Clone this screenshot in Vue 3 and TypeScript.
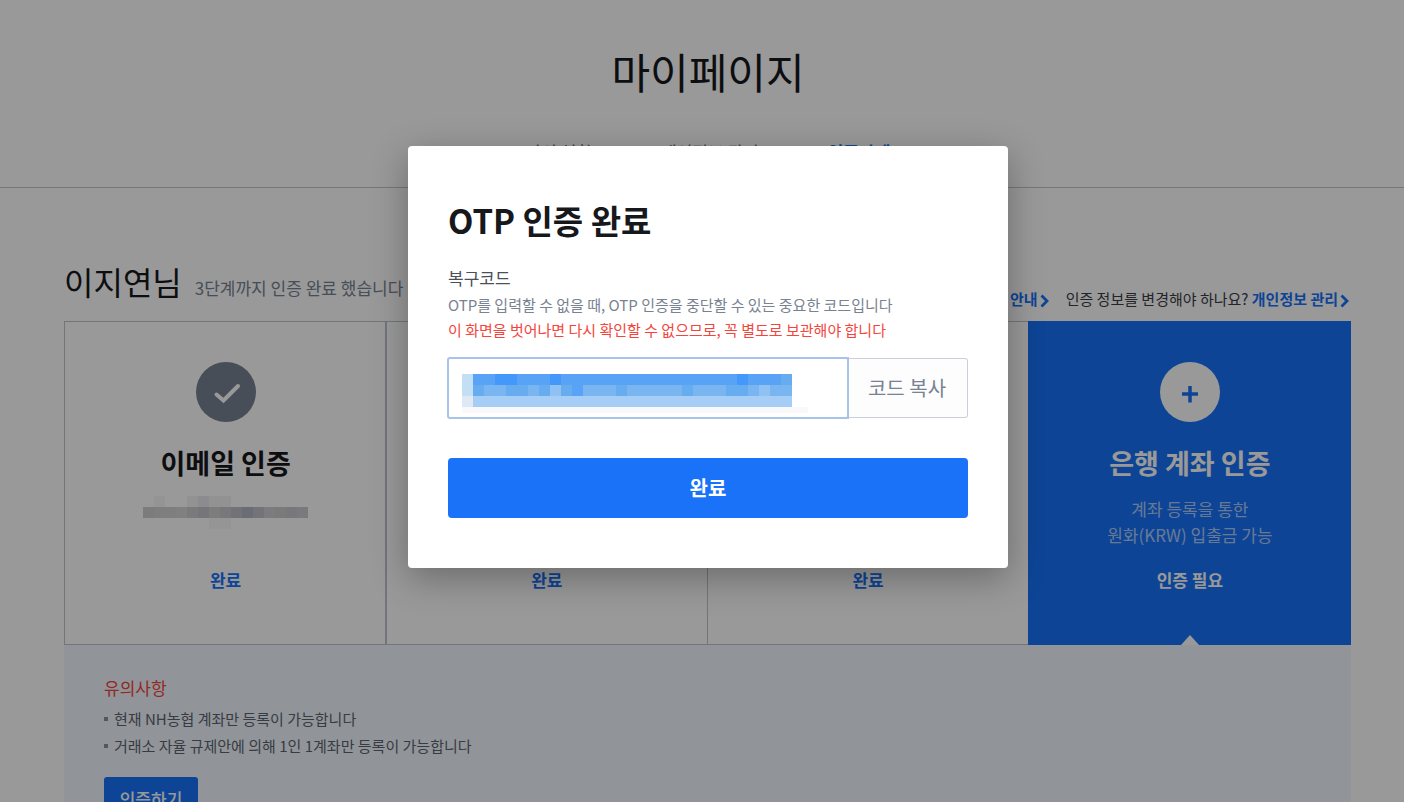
<script setup lang="ts">
import { ref } from 'vue'

interface Card {
  title: string
  desc: string[]
  status: string
  done: boolean
}

interface Tile {
  x: number
  y: number
  w: number
  h: number
  c: string
}

const tabs = ['나의 현황', '개인정보 관리', '인증단계']

const cards: Card[] = [
  { title: '이메일 인증', desc: [], status: '완료', done: true },
  { title: '휴대폰 인증', desc: [], status: '완료', done: true },
  { title: 'OTP 인증', desc: [], status: '완료', done: true },
  { title: '은행 계좌 인증', desc: ['계좌 등록을 통한', '원화(KRW) 입출금 가능'], status: '인증 필요', done: false },
]

const notes = ['현재 NH농협 계좌만 등록이 가능합니다', '거래소 자율 규제안에 의해 1인 1계좌만 등록이 가능합니다']

const code = ref('')

const shades: Record<string, string> = {
  '4': '#4498fa',
  '5': '#58a3f5',
  '6': '#68acf0',
  '7': '#79b6f1',
  '8': '#8fc1f3',
}
const row1 = '55445554555555555555555545556'.split('')
const row2 = '67766768657776777776777667877'.split('')

const codeTiles: Tile[] = [
  { x: 0, y: 0, w: 11, h: 22, c: '#c3dff6' },
  { x: 0, y: 22, w: 11, h: 11, c: '#dfe9f6' },
  { x: 11, y: 22, w: 319, h: 11, c: '#a5cdf5' },
  ...row1.map((k, i) => ({ x: 11 + i * 11, y: 0, w: 11, h: 11, c: shades[k] })),
  ...row2.map((k, i) => ({ x: 11 + i * 11, y: 11, w: 11, h: 11, c: shades[k] })),
  { x: 0, y: 33, w: 346, h: 6, c: '#f9f9fb' },
]

const mailShades = ['#cfcfd1', '#d2d2d4', '#d2d2d4', '#d6d6d8', '#cbcbcf', '#c4c4cb', '#d0d0d3', '#c8c8cc', '#bfc0c7', '#b2b4c2', '#c0c1c8', '#cfcfd2', '#cbcbce', '#c8c8cb', '#cccccf']
const mailTiles: Tile[] = [
  ...mailShades.map((c, i) => ({ x: i * 11, y: 11, w: 11, h: 11, c })),
  { x: 11, y: 0, w: 11, h: 11, c: '#f7f7f9' },
  { x: 44, y: 0, w: 11, h: 11, c: '#f3f3f6' },
  { x: 55, y: 0, w: 11, h: 11, c: '#e9e9f0' },
  { x: 66, y: 0, w: 22, h: 11, c: '#f3f3f6' },
  { x: 66, y: 22, w: 22, h: 11, c: '#f8f8f9' },
]
</script>

<template>
  <div class="page">
    <header class="top">
      <h1>마이페이지</h1>
      <nav class="tabs">
        <a v-for="(t, i) in tabs" :key="t" href="#" :class="{ active: i === 2 }">{{ t }}</a>
      </nav>
    </header>

    <main class="content">
      <div class="summary">
        <h2>이지연님</h2>
        <p class="level">3단계까지 인증 완료 했습니다</p>
        <div class="links">
          <span class="link">
            <a href="#">인증 안내</a>
            <svg class="chev" viewBox="0 0 9 14"><path d="M1.5 1.5L7 7l-5.5 5.5" fill="none" stroke="currentColor" stroke-width="2.8" /></svg>
          </span>
          <span class="link">
            인증 정보를 변경해야 하나요?&nbsp;<a href="#">개인정보 관리</a>
            <svg class="chev" viewBox="0 0 9 14"><path d="M1.5 1.5L7 7l-5.5 5.5" fill="none" stroke="currentColor" stroke-width="2.8" /></svg>
          </span>
        </div>
      </div>

      <section class="cards">
        <article v-for="c in cards" :key="c.title" class="card" :class="{ current: !c.done }">
          <svg class="badge" viewBox="0 0 60 60">
            <circle cx="30" cy="30" r="30" :fill="c.done ? '#788291' : '#fff'" />
            <path v-if="c.done" d="M20.5 32.5l7 6 14.5-14.5" fill="none" stroke="#fff" stroke-width="4" stroke-linecap="round" />
            <path v-else d="M30 24v16.5M22 32h16" stroke="#1772f8" stroke-width="3.5" fill="none" />
          </svg>
          <h3>{{ c.title }}</h3>
          <div class="desc">
            <span v-for="d in c.desc" :key="d">{{ d }}</span>
            <svg v-if="!c.desc.length" class="mail" viewBox="0 0 165 33" shape-rendering="crispEdges">
              <rect v-for="(t, i) in mailTiles" :key="i" :x="t.x" :y="t.y" :width="t.w" :height="t.h" :fill="t.c" />
            </svg>
          </div>
          <strong class="status">{{ c.status }}</strong>
          <svg v-if="!c.done" class="pointer" viewBox="0 0 18 10"><path d="M0 10l9-10 9 10z" fill="#fff" /></svg>
        </article>
      </section>

      <section class="notice">
        <h4>유의사항</h4>
        <ul>
          <li v-for="n in notes" :key="n">{{ n }}</li>
        </ul>
        <button class="verify" type="button">인증하기</button>
      </section>
    </main>

    <div class="overlay">
      <div class="modal" role="dialog" aria-labelledby="dlg-title">
        <h2 id="dlg-title">OTP 인증 완료</h2>
        <label for="code">복구코드</label>
        <p class="help">OTP를 입력할 수 없을 때, OTP 인증을 중단할 수 있는 중요한 코드입니다</p>
        <p class="help warn">이 화면을 벗어나면 다시 확인할 수 없으므로, 꼭 별도로 보관해야 합니다</p>
        <div class="field">
          <div class="box">
            <input id="code" v-model="code" type="text" readonly />
            <svg class="mask" viewBox="0 0 346 39" shape-rendering="crispEdges">
              <rect v-for="(t, i) in codeTiles" :key="i" :x="t.x" :y="t.y" :width="t.w" :height="t.h" :fill="t.c" />
            </svg>
          </div>
          <button class="copy" type="button">코드 복사</button>
        </div>
        <button class="done" type="button">완료</button>
      </div>
    </div>
  </div>
</template>

<style>
html,
body {
  overflow: hidden;
}
</style>

<style scoped>
.page {
  position: relative;
  height: 100vh;
  overflow: hidden;
  background: #fff;
  color: #17181c;
  font-family: 'Noto Sans CJK KR', 'Noto Sans', sans-serif;
}
h1,
h2,
h3,
h4,
p,
ul {
  margin: 0;
  padding: 0;
}
button,
input {
  font-family: inherit;
}
a {
  color: #1772f8;
  text-decoration: none;
  font-weight: 700;
}
.top {
  padding: 40px 0 0 12px;
  height: 188px;
  box-sizing: border-box;
  border-bottom: 1px solid #c3c7cf;
  text-align: center;
}
h1 {
  font-size: 42px;
  line-height: 62px;
  font-weight: 400;
}
.tabs {
  display: flex;
  justify-content: center;
  gap: 69px;
  margin-top: 37px;
  font-size: 17px;
  line-height: 26px;
}
.tabs a {
  color: #5d6470;
  font-weight: 400;
}
.tabs a.active {
  color: #1772f8;
  font-weight: 700;
}
.content {
  padding: 0 53px 0 64px;
}
.summary {
  display: flex;
  align-items: baseline;
  padding-top: 67px;
  height: 66px;
}
.summary h2 {
  font-size: 32px;
  line-height: 52px;
  font-weight: 400;
}
.level {
  margin-left: 13px;
  font-size: 17px;
  color: #788291;
}
.links {
  display: flex;
  align-self: flex-end;
  gap: 15px;
  margin-left: auto;
  padding-bottom: 10px;
  font-size: 15px;
  line-height: 24px;
  color: #3a3d45;
}
.link {
  display: flex;
  align-items: center;
}
.chev {
  width: 9px;
  height: 14px;
  margin: 4px 2px 0 2px;
  color: #1772f8;
}
.cards {
  display: grid;
  grid-template-columns: repeat(4, 1fr);
  border: 1px solid #bfc4cc;
}
.card {
  position: relative;
  display: flex;
  flex-direction: column;
  align-items: center;
  box-sizing: border-box;
  height: 322px;
  padding: 40px 0 0 1px;
  border-right: 1px solid #bfc4cc;
}
.card:first-child {
  margin-right: -1px;
  border-right-width: 2px;
}
.card.current {
  height: 324px;
  margin: -1px;
  padding-top: 41px;
  border: 0;
  background: #1772f8;
  color: #fff;
}
.badge {
  width: 60px;
  height: 60px;
}
.card h3 {
  margin-top: 21px;
  font-size: 27px;
  line-height: 40px;
  font-weight: 700;
}
.desc {
  display: flex;
  flex-direction: column;
  align-items: center;
  height: 52px;
  margin-top: 13px;
  font-size: 17px;
  line-height: 26px;
  color: rgba(255, 255, 255, 0.65);
}
.mail {
  width: 165px;
  height: 33px;
}
.status {
  margin-top: 18px;
  font-size: 17px;
  line-height: 28px;
  color: #1772f8;
}
.current .status {
  color: #fff;
}
.pointer {
  position: absolute;
  bottom: 0;
  left: calc(50% - 8px);
  width: 18px;
  height: 10px;
}
.notice {
  height: 300px;
  padding: 30px 40px;
  background: #f2f9ff;
}
.notice h4 {
  font-size: 17px;
  line-height: 26px;
  font-weight: 400;
  color: #f4453c;
}
.notice ul {
  margin-top: 4px;
  list-style: none;
}
.notice li {
  display: flex;
  align-items: center;
  gap: 6px;
  font-size: 15px;
  line-height: 27px;
  color: #5d6470;
}
.notice li::before {
  content: '';
  width: 4px;
  height: 4px;
  background: #8b93a0;
}
.verify {
  margin-top: 18px;
  width: 94px;
  height: 44px;
  border: 0;
  border-radius: 3px;
  background: #1772f8;
  color: #fff;
  font-size: 17px;
  font-weight: 500;
  line-height: 26px;
}
.overlay {
  position: absolute;
  inset: 0;
  display: flex;
  justify-content: center;
  align-items: flex-start;
  padding: 146px 0 0 12px;
  background: rgba(0, 0, 0, 0.4);
}
.modal {
  display: flex;
  flex-direction: column;
  box-sizing: border-box;
  width: 600px;
  padding: 49px 40px 50px;
  border-radius: 4px;
  background: #fff;
  box-shadow: 0 10px 36px rgba(0, 0, 0, 0.3);
}
.modal h2 {
  font-size: 33px;
  line-height: 50px;
  font-weight: 700;
}
.modal label {
  margin-top: 20px;
  font-size: 17px;
  line-height: 26px;
  color: #4a4f5a;
}
.help {
  font-size: 15px;
  line-height: 25px;
  color: #788291;
}
label + .help {
  margin-top: 1px;
}
.warn {
  color: #f4453c;
}
.field {
  display: flex;
  height: 60px;
  margin-top: 16px;
}
.box {
  position: relative;
  flex: 1;
  margin: -1px 0 -1px -1px;
}
.box input {
  box-sizing: border-box;
  width: 100%;
  height: 100%;
  border: 2px solid #a9c4ea;
  border-radius: 3px 0 0 3px;
  outline: 0;
  background: #fff;
}
.mask {
  position: absolute;
  left: 15px;
  top: 17px;
  width: 346px;
  height: 39px;
}
.copy {
  width: 119px;
  padding: 0 8px 2px 6px;
  border: 1px solid #cbd0d8;
  border-left: 0;
  border-radius: 0 3px 3px 0;
  background: #fdfdfe;
  color: #788291;
  font-size: 20px;
}
.done {
  height: 60px;
  margin-top: 40px;
  padding: 0 0 2px;
  border: 0;
  border-radius: 4px;
  background: #1972f8;
  color: #fff;
  font-size: 20px;
  font-weight: 700;
}
</style>
